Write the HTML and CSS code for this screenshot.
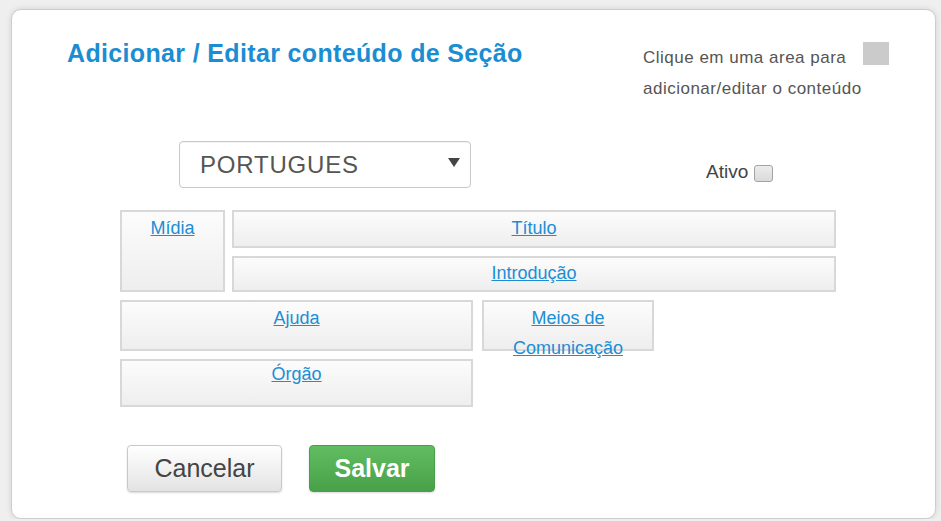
FILE: index.html
```html
<!DOCTYPE html>
<html lang="pt-BR">
<head>
  <meta charset="UTF-8" />
  <title>Adicionar / Editar conteúdo de Seção</title>
  <link rel="stylesheet" href="styles.css">
</head>
<body>
  <div class="modal">
    <div class="modal-header">
      <h2>Adicionar / Editar conteúdo de Seção</h2>
      <div class="hint">
        <p>Clique em uma area para<br>adicionar/editar o conteúdo</p>
        <span class="swatch"></span>
      </div>
    </div>

    <div class="options">
      <div class="select-wrap">
        <select class="lang">
          <option>PORTUGUES</option>
          <option>ENGLISH</option>
          <option>ESPAÑOL</option>
        </select>
        <svg class="arrow" width="12" height="9" viewBox="0 0 12 9"><path d="M0 0H12L6 9Z" fill="#444"/></svg>
      </div>
      <label class="ativo">Ativo <input type="checkbox"></label>
    </div>

    <div class="areas">
      <div class="area midia"><a href="#">Mídia</a></div>
      <div class="area titulo"><a href="#">Título</a></div>
      <div class="area intro"><a href="#">Introdução</a></div>
      <div class="area ajuda"><a href="#">Ajuda</a></div>
      <div class="area meios"><a href="#">Meios de Comunicação</a></div>
      <div class="area orgao"><a href="#">Órgão</a></div>
    </div>

    <div class="actions">
      <button class="btn btn-default">Cancelar</button>
      <button class="btn btn-success">Salvar</button>
    </div>
  </div>
</body>
</html>
```

FILE: styles.css
```css
body {
  margin: 0;
  background: #efefef;
  font-family: "Liberation Sans", Arial, sans-serif;
  color: #333;
}

.modal {
  box-sizing: border-box;
  width: 925px;
  height: 510px;
  margin: 9px 0 0 11px;
  padding: 28px 46px 0 55px;
  background: #fff;
  border: 1px solid #cdcdcd;
  border-radius: 10px;
  box-shadow: 0 0 6px rgba(0, 0, 0, 0.12);
}

.modal-header {
  display: flex;
  justify-content: space-between;
  align-items: flex-start;
}

.modal-header h2 {
  margin: 0;
  font-size: 25px;
  line-height: 30px;
  font-weight: bold;
  letter-spacing: 0.35px;
  color: #1a8dd3;
}

.hint {
  display: flex;
  align-items: flex-start;
  margin-top: 4px;
}

.hint p {
  margin: 0;
  width: 220px;
  font-size: 17px;
  letter-spacing: 0.5px;
  line-height: 31px;
  color: #555;
}

.swatch {
  width: 26px;
  height: 23px;
  background: #cbcbcb;
}

.options {
  display: flex;
  align-items: flex-end;
  margin-top: 37px;
}

.select-wrap {
  position: relative;
  margin-left: 112px;
}

.lang {
  appearance: none;
  -webkit-appearance: none;
  box-sizing: border-box;
  width: 292px;
  height: 47px;
  padding: 0 0 0 20px;
  border: 1px solid #c8c8c8;
  border-radius: 4px;
  background: #fff;
  font-family: "Liberation Sans", Arial, sans-serif;
  font-size: 24px;
  letter-spacing: 0.8px;
  color: #555;
  box-shadow: inset 0 1px 1px rgba(0, 0, 0, 0.05);
}

.arrow {
  position: absolute;
  right: 11px;
  top: 17px;
  pointer-events: none;
}

.ativo {
  display: flex;
  align-items: center;
  gap: 6px;
  margin: 0 0 5px 235px;
  font-size: 19px;
  color: #444;
}

.ativo input {
  appearance: none;
  -webkit-appearance: none;
  width: 19px;
  height: 17px;
  margin: 2px 0 0;
  border: 1px solid #a3a3a3;
  border-radius: 3px;
  background: linear-gradient(#ececec, #dadada);
}

.areas {
  display: grid;
  grid-template-columns: 105px 7px 241px 9px 172px 182px;
  grid-template-rows: 38px 8px 36px 8px 51px 8px 48px;
  width: 716px;
  margin: 22px 0 0 53px;
}

.area {
  box-sizing: border-box;
  padding-top: 1px;
  border: 2px solid #d8d8d8;
  background: linear-gradient(#fcfcfc, #eeeeee);
  text-align: center;
  font-size: 18px;
  line-height: 30px;
}

.area a {
  color: #1b8ed4;
  text-decoration: underline;
}

.midia { grid-column: 1; grid-row: 1 / 4; }
.titulo { grid-column: 3 / 7; grid-row: 1; }
.intro { grid-column: 3 / 7; grid-row: 3; padding-top: 0; }
.ajuda { grid-column: 1 / 4; grid-row: 5; }
.meios { grid-column: 5; grid-row: 5; }
.orgao { grid-column: 1 / 4; grid-row: 7; padding-top: 0; line-height: 26px; }

.actions {
  display: flex;
  gap: 27px;
  margin: 38px 0 0 60px;
}

.btn {
  height: 47px;
  border-radius: 4px;
  font-family: "Liberation Sans", Arial, sans-serif;
  font-size: 25px;
  cursor: pointer;
  box-shadow: 0 1px 2px rgba(0, 0, 0, 0.15);
}

.btn-default {
  width: 155px;
  border: 1px solid #c9c9c9;
  background: linear-gradient(#ffffff, #e3e3e3);
  color: #444;
}

.btn-success {
  width: 126px;
  border: 1px solid #4a9e4a;
  background: linear-gradient(#62bd62, #48a148);
  color: #fff;
  font-weight: bold;
}
```
